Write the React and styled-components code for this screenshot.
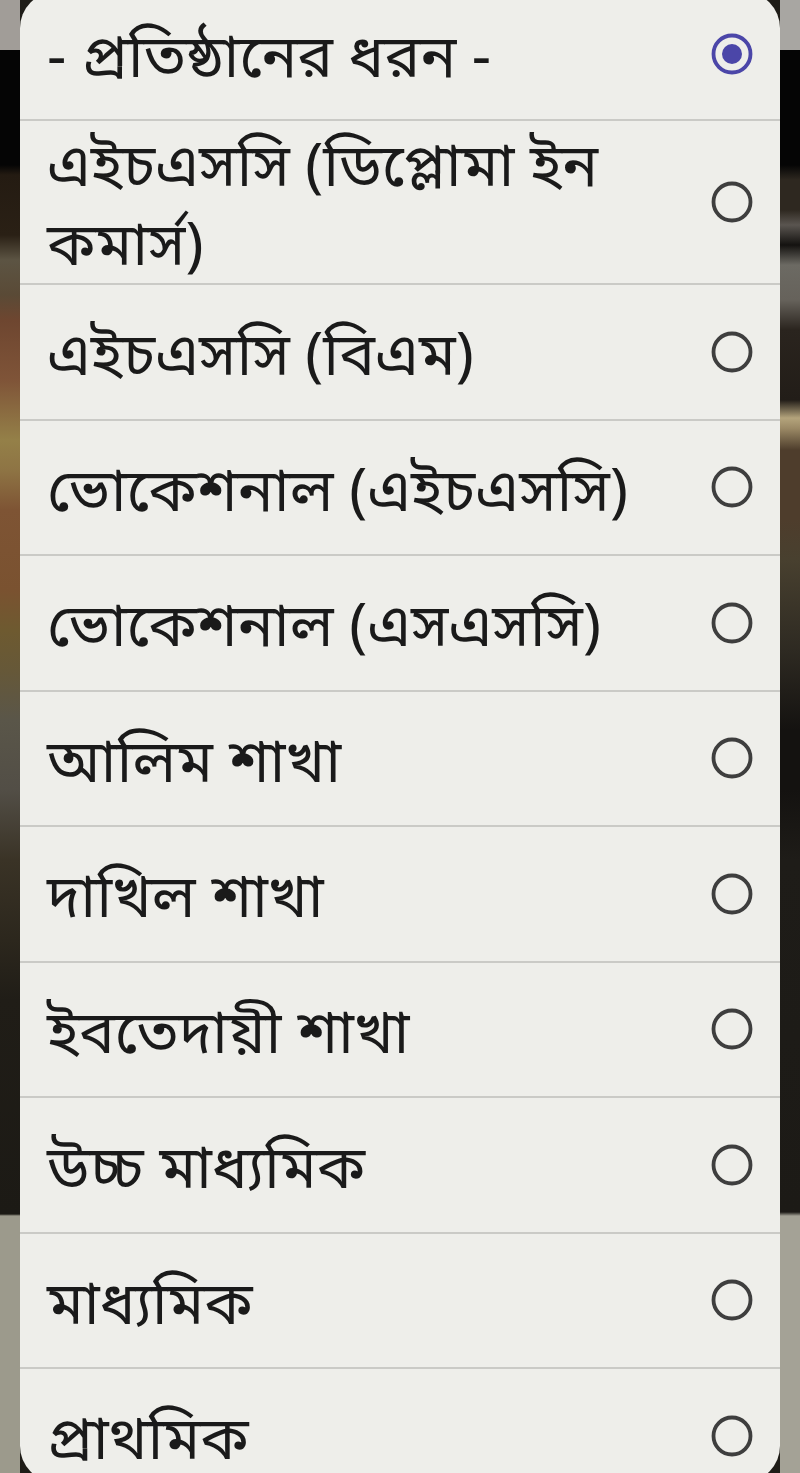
import React from "react";
import styled, { createGlobalStyle } from "styled-components";

const GlobalStyle = createGlobalStyle`
  html, body { margin: 0; padding: 0; }
  body {
    width: 800px;
    height: 1473px;
    overflow: hidden;
    font-family: "Noto Sans Bengali", "Noto Sans", "Lohit Bengali", sans-serif;
    background-color: #1e1c17;
    background-repeat: no-repeat;
    background-size: 20px 100%, 20px 100%;
    background-position: left top, right top;
    background-image:
      linear-gradient(to bottom,
        #a19d98 0px, #a19d98 50px, #050505 50px, #050505 165px,
        #241b12 175px, #2a2015 235px, #5c5443 260px, #5a4a36 295px,
        #6e4630 320px, #7f5438 380px, #948048 440px, #8e7444 470px,
        #7e5434 510px, #7a5230 590px, #6e5a30 630px, #665838 670px,
        #5a5649 720px, #524e46 790px, #3a3326 860px, #2c271d 940px,
        #201d17 1000px, #1c1a15 1214px, #9c9a8c 1216px, #9c9a8c 1473px),
      linear-gradient(to bottom,
        #a8a6a2 0px, #a8a6a2 50px, #050505 50px, #050505 165px,
        #2e2820 180px, #2e2820 210px, #5a5550 225px, #141210 245px,
        #6c6a63 265px, #66625b 300px, #2a241e 330px, #221d18 400px,
        #b4a47c 418px, #9c8a66 428px, #4e3d2c 450px, #4e3d2c 520px,
        #48402f 560px, #2e2a22 650px, #141210 730px, #141210 790px,
        #1e1c18 860px, #1c1a16 1212px, #a4a296 1216px, #a4a296 1473px);
  }
`;

const Dialog = styled.div`
  margin: -8px 20px 0;
  height: 1490px;
  background: #eeeeea;
  border-radius: 36px;
  overflow: hidden;
  display: flex;
  flex-direction: column;
`;

const Option = styled.label`
  flex: none;
  display: flex;
  align-items: center;
  gap: 20px;
  min-height: ${(p) => (p.$first ? "127px" : "135.5px")};
  padding: ${(p) => (p.$first ? "0 27px 4px 27px" : "2px 27px 2px 27px")};
  border-top: ${(p) => (p.$first ? "none" : "2px solid #cacac6")};
  box-sizing: border-box;
  cursor: pointer;
`;

const OptionText = styled.span`
  flex: 1;
  font-size: 60px;
  line-height: 79px;
  padding-top: 8px;
  margin-bottom: -8px;
  color: #1a1a1a;
`;

const Radio = styled.svg`
  flex: none;
  width: 42px;
  height: 42px;
`;

const RadioIcon = ({ checked }) => (
  <Radio viewBox="0 0 42 42">
    <circle
      cx="21"
      cy="21"
      r="18.5"
      fill="none"
      stroke={checked ? "#4b46a8" : "#3e3e3e"}
      strokeWidth="3.8"
    />
    {checked && <circle cx="21" cy="21" r="10" fill="#4b46a8" />}
  </Radio>
);

const options = [
  "- প্রতিষ্ঠানের ধরন -",
  "এইচএসসি (ডিপ্লোমা ইন কমার্স)",
  "এইচএসসি (বিএম)",
  "ভোকেশনাল (এইচএসসি)",
  "ভোকেশনাল (এসএসসি)",
  "আলিম শাখা",
  "দাখিল শাখা",
  "ইবতেদায়ী শাখা",
  "উচ্চ মাধ্যমিক",
  "মাধ্যমিক",
  "প্রাথমিক",
];

export default function App() {
  return (
    <>
      <GlobalStyle />
      <Dialog>
        {options.map((o, i) => (
          <Option key={o} $first={i === 0}>
            <OptionText>{o}</OptionText>
            <RadioIcon checked={i === 0} />
          </Option>
        ))}
      </Dialog>
    </>
  );
}
